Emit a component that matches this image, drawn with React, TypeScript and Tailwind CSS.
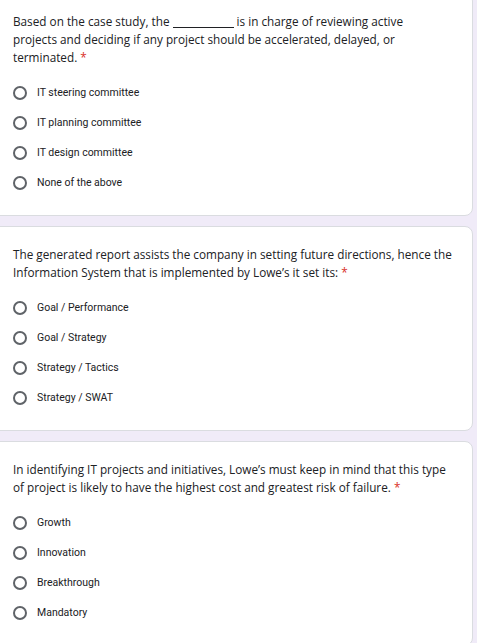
import React from "react";

type Q = { lines: React.ReactNode[]; options: string[] };

const questions: Q[] = [
  {
    lines: [
      <>
        Based on the case study, the{" "}
        <span className="inline-block h-[1px] w-[61px] bg-[#202124] align-[-2px]" /> is in charge of reviewing active
      </>,
      "projects and deciding if any project should be accelerated, delayed, or",
      "terminated.",
    ],
    options: ["IT steering committee", "IT planning committee", "IT design committee", "None of the above"],
  },
  {
    lines: [
      "The generated report assists the company in setting future directions, hence the",
      "Information System that is implemented by Lowe’s it set its:",
    ],
    options: ["Goal / Performance", "Goal / Strategy", "Strategy / Tactics", "Strategy / SWAT"],
  },
  {
    lines: [
      "In identifying IT projects and initiatives, Lowe’s must keep in mind that this type",
      "of project is likely to have the highest cost and greatest risk of failure.",
    ],
    options: ["Growth", "Innovation", "Breakthrough", "Mandatory"],
  },
];

function Card({ q }: { q: Q }) {
  return (
    <div className="ml-[-8px] w-[481px] shrink-0 rounded-lg border border-[#dadce0] bg-white pl-[20px] pr-[18px] pt-[18px] pb-[17px]">
      <div
        className="text-[11.75px] leading-[18px] text-[#202124] whitespace-nowrap"
        style={{ fontFamily: '"Open Sans", "Liberation Sans", sans-serif' }}
      >
        {q.lines.map((l, i) => (
          <div key={i}>
            {l}
            {i === q.lines.length - 1 && <span className="text-[#d93025]"> *</span>}
          </div>
        ))}
      </div>
      <div className="mt-[12px] flex flex-col">
        {q.options.map((o) => (
          <div key={o} className="flex h-[30px] items-center gap-[10px]">
            <div className="h-[14px] w-[14px] shrink-0 rounded-full border-2 border-[#5f6368]" />
            <span
              className="text-[10.5px] text-[#202124]"
              style={{ fontFamily: 'Roboto, "Liberation Sans", sans-serif' }}
            >
              {o}
            </span>
          </div>
        ))}
      </div>
    </div>
  );
}

export default function App() {
  return (
    <div className="h-[643px] w-[477px] overflow-hidden bg-[#f0ebf8]">
      <div className="mt-[-7px] flex flex-col gap-[10px]">
        {questions.map((q, i) => (
          <Card key={i} q={q} />
        ))}
      </div>
    </div>
  );
}
